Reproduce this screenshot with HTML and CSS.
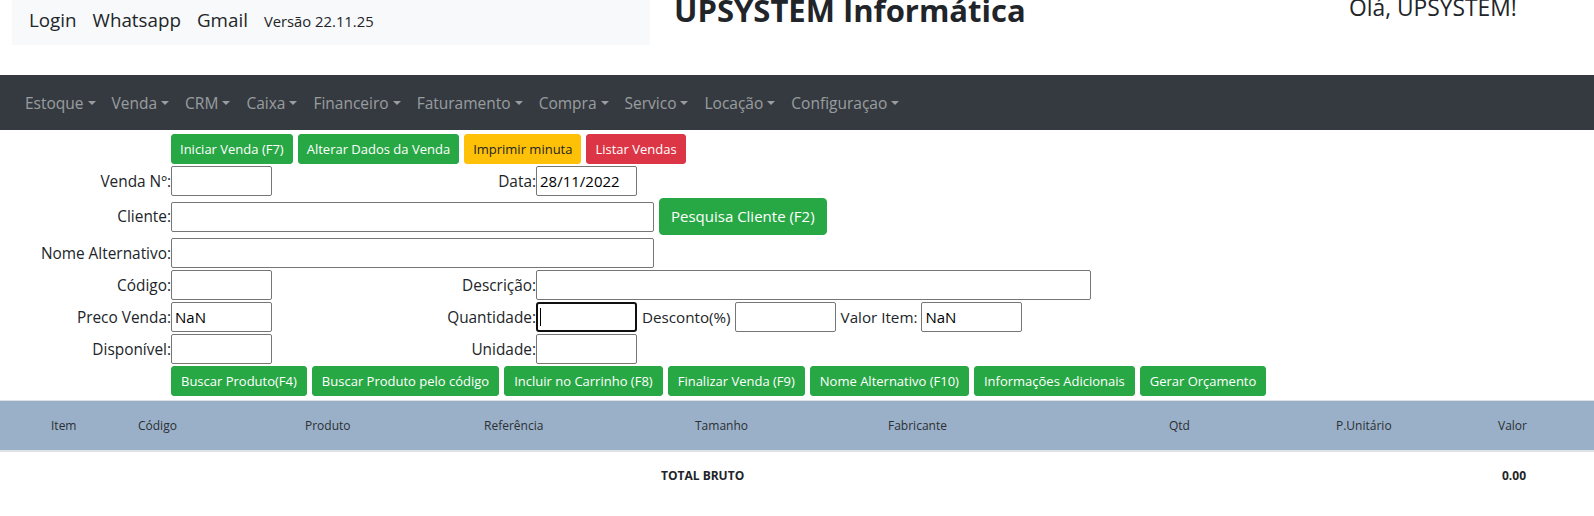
FILE: index.html
```html
<!DOCTYPE html>
<html lang="pt-BR">
<head>
<meta charset="utf-8">
<title>UPSYSTEM Informática - Venda</title>
<link rel="stylesheet" href="styles.css">
</head>
<body>
<header class="top">
  <nav class="quick">
    <a class="quick-link">Login</a>
    <a class="quick-link">Whatsapp</a>
    <a class="quick-link">Gmail</a>
    <span class="version">Versão 22.11.25</span>
  </nav>
  <h2 class="brand">UPSYSTEM Informática</h2>
  <h4 class="hello">Olá, UPSYSTEM!</h4>
</header>

<nav class="menu">
  <a class="menu-item">Estoque</a>
  <a class="menu-item">Venda</a>
  <a class="menu-item">CRM</a>
  <a class="menu-item">Caixa</a>
  <a class="menu-item">Financeiro</a>
  <a class="menu-item">Faturamento</a>
  <a class="menu-item">Compra</a>
  <a class="menu-item">Servico</a>
  <a class="menu-item">Locação</a>
  <a class="menu-item">Configuraçao</a>
</nav>

<main class="sale">
  <div class="actions">
    <button class="btn btn-green">Iniciar Venda (F7)</button>
    <button class="btn btn-green">Alterar Dados da Venda</button>
    <button class="btn btn-yellow">Imprimir minuta</button>
    <button class="btn btn-red">Listar Vendas</button>
  </div>

  <div class="form">
    <div class="row">
      <label class="lbl">Venda Nº:</label>
      <input class="inp" type="text">
      <label class="lbl lbl-mid">Data:</label>
      <input class="inp" type="text" value="28/11/2022">
    </div>
    <div class="row row-tall">
      <label class="lbl">Cliente:</label>
      <input class="inp inp-wide" type="text">
      <button class="btn btn-green btn-big">Pesquisa Cliente (F2)</button>
    </div>
    <div class="row">
      <label class="lbl">Nome Alternativo:</label>
      <input class="inp inp-wide" type="text">
    </div>
    <div class="row">
      <label class="lbl">Código:</label>
      <input class="inp" type="text">
      <label class="lbl lbl-mid">Descrição:</label>
      <input class="inp inp-desc" type="text">
    </div>
    <div class="row">
      <label class="lbl">Preco Venda:</label>
      <input class="inp" type="text" value="NaN">
      <label class="lbl lbl-mid">Quantidade:</label>
      <span class="focus-wrap"><input class="inp is-focused" type="text"><span class="caret"></span></span>
      <label class="lbl-inline">Desconto(%)</label>
      <input class="inp" type="text">
      <label class="lbl-inline">Valor Item:</label>
      <input class="inp" type="text" value="NaN">
    </div>
    <div class="row">
      <label class="lbl">Disponível:</label>
      <input class="inp" type="text">
      <label class="lbl lbl-mid">Unidade:</label>
      <input class="inp" type="text">
    </div>
  </div>

  <div class="actions actions-bottom">
    <button class="btn btn-green">Buscar Produto(F4)</button>
    <button class="btn btn-green">Buscar Produto pelo código</button>
    <button class="btn btn-green">Incluir no Carrinho (F8)</button>
    <button class="btn btn-green">Finalizar Venda (F9)</button>
    <button class="btn btn-green">Nome Alternativo (F10)</button>
    <button class="btn btn-green">Informações Adicionais</button>
    <button class="btn btn-green">Gerar Orçamento</button>
  </div>
</main>

<section class="items">
  <div class="items-head">
    <span>Item</span>
    <span>Código</span>
    <span>Produto</span>
    <span>Referência</span>
    <span>Tamanho</span>
    <span>Fabricante</span>
    <span>Qtd</span>
    <span>P.Unitário</span>
    <span>Valor</span>
  </div>
  <div class="items-total">
    <span>TOTAL BRUTO</span>
    <span>0.00</span>
  </div>
</section>
</body>
</html>
```

FILE: styles.css
```css
* { box-sizing: border-box; }

html, body {
  margin: 0;
  padding: 0;
  background: #fff;
}

body {
  font-family: "Open Sans", "Noto Sans", sans-serif;
  color: #212529;
  overflow: hidden;
}

/* ---------- top header ---------- */
.top {
  display: flex;
  align-items: flex-start;
  height: 45px;
}

.quick {
  margin-left: 12px;
  width: 638px;
  height: 45px;
  background: #f8f9fa;
  display: flex;
  align-items: baseline;
  padding: 7px 0 0 17px;
}

.quick-link {
  font-size: 18.8px;
  line-height: 26px;
  color: #212529;
  margin-right: 16px;
}

.version {
  font-size: 14.8px;
  line-height: 26px;
  color: #212529;
}

.brand {
  margin: -8px 0 0 24px;
  width: 675px;
  font-size: 31px;
  line-height: 36px;
  font-weight: 700;
  color: #212529;
  white-space: nowrap;
}

.hello {
  margin: -7px 0 0 0;
  font-size: 22.8px;
  line-height: 30px;
  font-weight: 400;
  color: #212529;
  white-space: nowrap;
}

/* ---------- dark menu ---------- */
.menu {
  margin-top: 30px;
  height: 55px;
  background: #343a40;
  display: flex;
  align-items: center;
  padding: 0 16px 0 17px;
}

.menu-item {
  padding: 0 8px;
  font-size: 15.5px;
  line-height: 24px;
  color: rgba(255, 255, 255, 0.5);
  white-space: nowrap;
}

.menu-item::after {
  content: "";
  display: inline-block;
  margin-left: 4px;
  vertical-align: 4px;
  border-top: 4.5px solid;
  border-left: 4.5px solid transparent;
  border-right: 4.5px solid transparent;
}

/* ---------- buttons ---------- */
.actions {
  display: flex;
  gap: 5px;
  padding-left: 171px;
  margin-top: 4px;
}

.actions-bottom {
  margin-top: 2px;
}

.btn {
  font-family: "Open Sans", "Noto Sans", sans-serif;
  font-size: 13px;
  line-height: 20px;
  padding: 4px 8px;
  border: 1px solid transparent;
  border-radius: 3px;
  white-space: nowrap;
  cursor: pointer;
}

.actions-bottom .btn {
  padding: 4px 9px;
}

.btn-green { background: #28a745; border-color: #28a745; color: #fff; }
.btn-yellow { background: #ffc107; border-color: #ffc107; color: #212529; }
.btn-red { background: #dc3545; border-color: #dc3545; color: #fff; }

.btn-big {
  margin-left: 5px;
  font-size: 15px;
  line-height: 23px;
  padding: 6px 11px;
  border-radius: 4px;
}

/* ---------- form ---------- */
.form {
  display: flex;
  flex-direction: column;
  gap: 2px;
  margin-top: 2px;
}

.row {
  display: flex;
  align-items: center;
}

.row-tall {
  margin-bottom: 1px;
}

.lbl {
  width: 171px;
  text-align: right;
  font-size: 15.4px;
  white-space: nowrap;
}

.lbl-mid {
  width: 264px;
}

.lbl-inline {
  font-size: 15.2px;
  margin: 0 4px 0 5px;
  white-space: nowrap;
}

.inp {
  width: 101px;
  height: 30px;
  border: 1px solid #767676;
  border-radius: 2px;
  padding: 1px 3px;
  font-family: "Open Sans", "Noto Sans", sans-serif;
  font-size: 15px;
  color: #000;
  background: #fff;
}

.inp-wide { width: 483px; }
.inp-desc { width: 555px; }

.focus-wrap {
  position: relative;
  display: inline-block;
  height: 30px;
}

.inp.is-focused {
  border: 2px solid #101010;
  border-radius: 3px;
  outline: none;
}

.caret {
  position: absolute;
  left: 4px;
  top: 6px;
  width: 1px;
  height: 18px;
  background: #000;
}

/* ---------- items table ---------- */
.items {
  margin-top: 4px;
}

.items-head {
  display: grid;
  grid-template-columns: 87px 167px 179px 211px 193px 281px 167px 162px 1fr;
  padding-left: 51px;
  height: 52px;
  align-items: center;
  background: #9ab0c8;
  border-top: 1px solid #dee2e6;
  border-bottom: 2px solid #dee2e6;
  font-size: 12px;
  color: #2b2f33;
}

.items-total {
  display: grid;
  grid-template-columns: 841px 1fr;
  padding-left: 661px;
  height: 47px;
  align-items: center;
  font-size: 12px;
  font-weight: 700;
  color: #212529;
}
```
